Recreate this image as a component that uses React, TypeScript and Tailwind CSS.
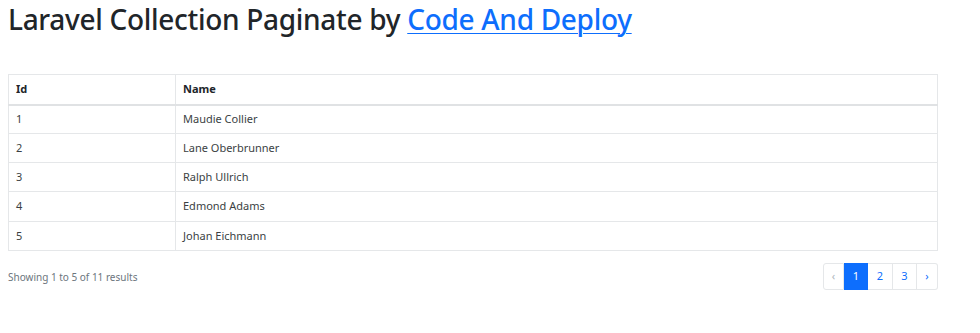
import React from 'react';

const rows = [
  { id: 1, name: 'Maudie Collier' },
  { id: 2, name: 'Lane Oberbrunner' },
  { id: 3, name: 'Ralph Ullrich' },
  { id: 4, name: 'Edmond Adams' },
  { id: 5, name: 'Johan Eichmann' },
];

function App() {
  return (
    <div className="min-h-screen bg-white px-2 text-[#212529]" style={{ fontFamily: '"Noto Sans", "Open Sans", sans-serif' }}>
      {/* Header */}
      <h1 className="pt-[1px] text-[28px] leading-[36px] font-medium tracking-[-0.3px]">
        Laravel Collection Paginate by{' '}
        <a href="#" className="text-[#0d6efd] underline decoration-1 underline-offset-[3px]">Code And Deploy</a>
      </h1>

      {/* Table */}
      <table className="mt-[37px] w-[930px] border-collapse border border-[#e5e7e9] text-[11px]">
        <thead>
          <tr className="h-[30px] border-b-2 border-[#e0e2e4]">
            <th className="w-[167px] border-r border-[#e5e7e9] px-[7px] text-left font-bold">Id</th>
            <th className="px-[7px] text-left font-bold">Name</th>
          </tr>
        </thead>
        <tbody className="text-[#3b3f43]">
          {rows.map((r) => (
            <tr key={r.id} className={`${r.id === 4 ? 'h-[30px]' : 'h-[29px]'} border-b border-[#e5e7e9]`}>
              <td className="border-r border-[#e5e7e9] px-[7px]">{r.id}</td>
              <td className="px-[7px]">{r.name}</td>
            </tr>
          ))}
        </tbody>
      </table>

      {/* Footer / pagination */}
      <div className="mt-[12px] flex w-[930px] items-center justify-between">
        <p className="pt-[1px] text-[10px] text-[#6c757d]">Showing 1 to 5 of 11 results</p>
        <nav className="flex h-[27px] text-[11px]">
          <span className="flex w-[21px] items-center justify-center rounded-l-[3px] border border-[#e5e7e9] text-[#adb5bd]">‹</span>
          <span className="flex w-[24px] items-center justify-center bg-[#0d6efd] text-white">1</span>
          <span className="flex w-[25px] items-center justify-center border border-l-0 border-[#e5e7e9] text-[#0d6efd]">2</span>
          <span className="flex w-[24px] items-center justify-center border border-l-0 border-[#e5e7e9] text-[#0d6efd]">3</span>
          <span className="flex w-[21px] items-center justify-center rounded-r-[3px] border border-l-0 border-[#e5e7e9] text-[#0d6efd]">›</span>
        </nav>
      </div>
    </div>
  );
}

export default App;
